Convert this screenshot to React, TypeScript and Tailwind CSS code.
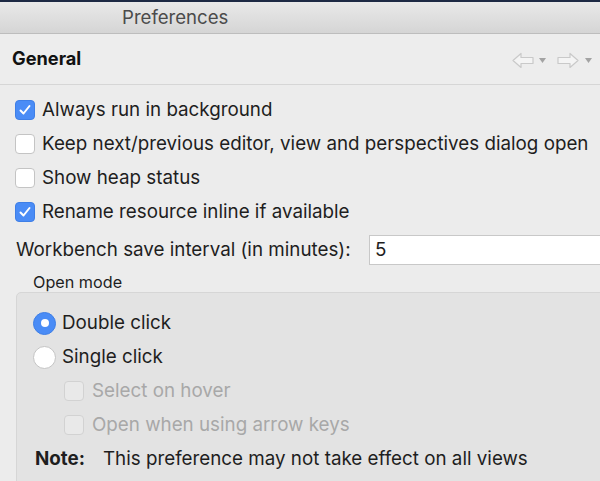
import React from "react";

const font = { fontFamily: "Inter, 'Noto Sans', 'Liberation Sans', sans-serif" };

function Check({ checked, disabled }: { checked?: boolean; disabled?: boolean }) {
  if (checked) {
    return (
      <div className="w-[20px] h-[20px] rounded-[4px] bg-[#4a8cf6] border border-[#3f7fe6] flex items-center justify-center shrink-0">
        <svg width="14" height="14" viewBox="0 0 14 14">
          <path d="M2.5 7.5 L5.5 10.5 L11.5 3" stroke="white" strokeWidth="2" fill="none" strokeLinecap="round" strokeLinejoin="round" />
        </svg>
      </div>
    );
  }
  return (
    <div
      className={
        "w-[20px] h-[20px] rounded-[4px] border shrink-0 " +
        (disabled ? "bg-[#e9e9e9] border-[#d2d2d2]" : "bg-white border-[#c4c4c4]")
      }
    />
  );
}

function Radio({ checked }: { checked?: boolean }) {
  if (checked) {
    return (
      <div className="w-[23px] h-[23px] rounded-full bg-[#4a8cf6] border border-[#3f7fe6] flex items-center justify-center shrink-0">
        <div className="w-[8px] h-[8px] rounded-full bg-white" />
      </div>
    );
  }
  return <div className="w-[23px] h-[23px] rounded-full bg-white border border-[#c4c4c4] shrink-0" />;
}

function ArrowLeft() {
  return (
    <svg width="22" height="17" viewBox="0 0 22 17">
      <path d="M1 8.5 L9 1.5 L9 5.5 L21 5.5 L21 11.5 L9 11.5 L9 15.5 Z" fill="#f4f4f4" stroke="#c9c9c9" strokeWidth="1.2" strokeLinejoin="round" />
    </svg>
  );
}
function ArrowRight() {
  return (
    <svg width="22" height="17" viewBox="0 0 22 17">
      <path d="M21 8.5 L13 1.5 L13 5.5 L1 5.5 L1 11.5 L13 11.5 L13 15.5 Z" fill="#f4f4f4" stroke="#c9c9c9" strokeWidth="1.2" strokeLinejoin="round" />
    </svg>
  );
}
function Tri() {
  return (
    <svg width="7" height="5" viewBox="0 0 7 5">
      <path d="M0 0 L7 0 L3.5 5 Z" fill="#a3a3a3" />
    </svg>
  );
}

export default function App() {
  return (
    <div className="w-[600px] h-[481px] overflow-hidden bg-[#ececec] text-[#1e1e1e] flex flex-col" style={font}>
      <div className="h-[2px] shrink-0 bg-[#1d2a44]" />
      <div className="h-[32px] shrink-0 bg-gradient-to-b from-[#e9e9e9] to-[#d5d5d5] border-b border-[#bdbdbd] flex items-center pl-[122px] text-[18.6px] text-[#4b4b4b]">
        Preferences
      </div>
      <div className="h-[51px] shrink-0 border-b border-[#d6d6d6] bg-[#ededed] flex items-center pl-[12px] pr-[8px]">
        <div className="text-[18.2px] font-bold text-[#111] flex-1">General</div>
        <div className="flex items-center mt-[3px]">
          <ArrowLeft />
          <div className="ml-[5px] mr-[11px]"><Tri /></div>
          <ArrowRight />
          <div className="ml-[6px]"><Tri /></div>
        </div>
      </div>

      <div className="flex flex-col shrink-0 pl-[15px] pt-[8px] text-[18.8px]">
        <div className="h-[34px] shrink-0 flex items-center gap-[7px]">
          <Check checked />
          <span>Always run in background</span>
        </div>
        <div className="h-[34px] shrink-0 flex items-center gap-[7px] whitespace-nowrap">
          <Check />
          <span>Keep next/previous editor, view and perspectives dialog open</span>
        </div>
        <div className="h-[34px] shrink-0 flex items-center gap-[7px]">
          <Check />
          <span>Show heap status</span>
        </div>
        <div className="h-[34px] shrink-0 flex items-center gap-[7px]">
          <Check checked />
          <span>Rename resource inline if available</span>
        </div>
        <div className="h-[30px] shrink-0 mt-[6px] flex items-center pl-[1px] whitespace-nowrap">
          <span className="w-[353px] shrink-0">Workbench save interval (in minutes):</span>
          <div className="h-[30px] w-[260px] bg-white border border-[#c8c8c8] flex items-center pl-[5px] shrink-0">5</div>
        </div>
        <div className="h-[20px] shrink-0 mt-[7px] pl-[18px] flex items-center text-[16.2px]">Open mode</div>
        <div className="ml-[1px] w-[620px] h-[200px] shrink-0 bg-[#e3e3e3] border border-[#d6d6d6] rounded-[5px] pt-[13px] pl-[16px] flex flex-col">
          <div className="h-[34px] shrink-0 flex items-center gap-[6px]">
            <Radio checked />
            <span>Double click</span>
          </div>
          <div className="h-[34px] shrink-0 flex items-center gap-[6px]">
            <Radio />
            <span>Single click</span>
          </div>
          <div className="h-[34px] shrink-0 flex items-center gap-[8px] pl-[31px] text-[#a8a8a8]">
            <Check disabled />
            <span>Select on hover</span>
          </div>
          <div className="h-[34px] shrink-0 flex items-center gap-[8px] pl-[31px] text-[#a8a8a8]">
            <Check disabled />
            <span>Open when using arrow keys</span>
          </div>
          <div className="h-[34px] shrink-0 flex items-center pl-[2px] whitespace-nowrap">
            <span className="font-bold w-[68px] shrink-0">Note:</span>
            <span>This preference may not take effect on all views</span>
          </div>
        </div>
      </div>
    </div>
  );
}
